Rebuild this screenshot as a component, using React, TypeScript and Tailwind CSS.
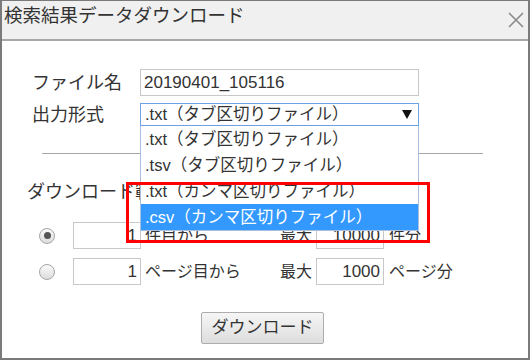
import React from "react";

const options = [
  ".txt（タブ区切りファイル）",
  ".tsv（タブ区切りファイル）",
  ".txt（カンマ区切りファイル）",
  ".csv（カンマ区切りファイル）",
];

function Radio({ checked }: { checked?: boolean }) {
  return (
    <span className="w-[16px] h-[16px] rounded-full border border-[#a6a6a6] bg-gradient-to-b from-[#fafafa] to-[#dcdcdc] flex items-center justify-center shrink-0">
      {checked && <span className="w-[7px] h-[7px] rounded-full bg-[#555]" />}
    </span>
  );
}

function RangeRow({ from, to, unit, top }: { from: string; to: string; unit: string; top: string }) {
  return (
    <div className={`flex items-center h-[27px] pl-[37px] text-[16px] text-[#333] ${top}`}>
      <Radio checked={unit === "件"} />
      <div className="ml-[18px] w-[68px] h-[27px] border border-[#c8c8c8] text-right pr-[3px] text-[17px] leading-[25px]">{from}</div>
      <span className="ml-[4px] w-[135px]">{unit}目から</span>
      <span className="w-[36px]">最大</span>
      <div className="w-[68px] h-[27px] border border-[#c8c8c8] text-right pr-[3px] text-[17px] leading-[25px]">{to}</div>
      <span className="ml-[5px]">{unit}分</span>
    </div>
  );
}

export default function App() {
  return (
    <div className="w-[530px] h-[360px] relative flex flex-col bg-white border-x-2 border-b-2 border-t border-[#7a7a7a] overflow-hidden font-['Liberation_Sans','Noto_Sans_CJK_JP',sans-serif] text-[#333]">
      {/* タイトルバー */}
      <div className="h-[40px] shrink-0 bg-[#f0f0f0] border-b-2 border-[#a8a8a8] flex items-start justify-between pl-[2px] pr-[4px]">
        <span className="text-[18.5px] leading-[26px] pt-[2px] text-[#333]">検索結果データダウンロード</span>
        <svg width="16" height="16" viewBox="0 0 16 16" className="mt-[11px]">
          <path d="M1 1 L15 15 M15 1 L1 15" stroke="#8a8a8a" strokeWidth="1.6" fill="none" />
        </svg>
      </div>

      {/* ファイル名 */}
      <div className="flex items-center h-[27px] mt-[28px] pl-[30px]">
        <span className="w-[108px] text-[18px] leading-[26px]">ファイル名</span>
        <div className="w-[279px] h-[27px] border border-[#c8c8c8] px-[3px] text-[17px] leading-[25px]">20190401_105116</div>
      </div>

      {/* 出力形式 */}
      <div className="flex items-center h-[23px] mt-[7px] pl-[30px]">
        <span className="w-[108px] text-[18px] leading-[26px]">出力形式</span>
        <div className="w-[279px] h-[23px] border border-[#6f9fe6] pl-[4px] pr-[6px] flex items-center justify-between text-[16.5px] leading-[21px]">
          <span>.txt（タブ区切りファイル）</span>
          <svg width="10" height="9" viewBox="0 0 10 9">
            <path d="M0 0 H10 L5 9 Z" fill="#111" />
          </svg>
        </div>
      </div>

      <div className="h-px bg-[#a6a6a6] mt-[27px] ml-[40px] w-[441px]" />

      <div className="mt-[25px] pl-[25px] text-[18px] leading-[26px]">ダウンロード範囲</div>

      <RangeRow from="1" to="10000" unit="件" top="mt-[17px]" />
      <RangeRow from="1" to="1000" unit="ページ" top="mt-[9px]" />

      <div className="mt-[27px] ml-[199px]">
        <button className="w-[123px] h-[32px] border border-[#adadad] rounded-[2px] bg-gradient-to-b from-[#f6f6f6] to-[#dddddd] text-[17px] text-[#333] leading-[30px]">
          ダウンロード
        </button>
      </div>

      {/* ドロップダウンリスト */}
      <div className="absolute left-[138px] top-[125px] w-[279px] bg-white border-x border-b border-[#a9bfe0] text-[16.5px]">
        {options.map((o, i) => (
          <div
            key={o}
            className={`h-[26px] pl-[4px] leading-[27px] ${i === 3 ? "bg-[#3399ff] text-white" : "text-[#333]"}`}
          >
            {o}
          </div>
        ))}
      </div>

      {/* 赤枠 */}
      <div className="absolute left-[124px] top-[181px] w-[304px] h-[61px] border-[3px] border-[#ff0000]" />
    </div>
  );
}
